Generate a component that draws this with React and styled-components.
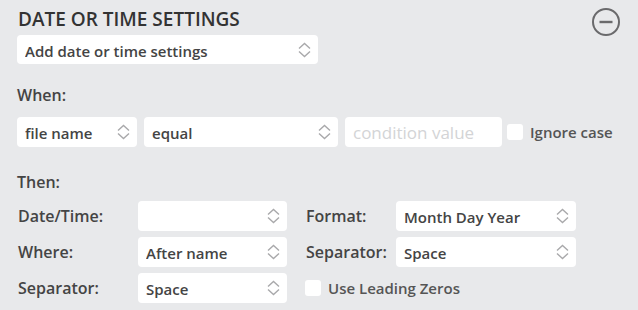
import React from "react";
import styled, { createGlobalStyle } from "styled-components";

const Global = createGlobalStyle`
  html, body { margin: 0; padding: 0; background: #e8e9eb; }
  body { font-family: "Open Sans", "Noto Sans", sans-serif; color: #444; }
`;

const Panel = styled.div`
  width: 638px;
  height: 310px;
  box-sizing: border-box;
  padding: 6px 0 0 17px;
  background: #e8e9eb;
  overflow: hidden;
`;

const Header = styled.div`
  display: flex;
  justify-content: space-between;
  align-items: flex-start;
  padding-right: 17px;
`;

const HeaderLeft = styled.div`
  display: flex;
  flex-direction: column;
  gap: 3px;
`;

const Title = styled.h1`
  margin: 0 0 0 1px;
  font-size: 19px;
  line-height: 26px;
  font-weight: 600;
  color: #333;
`;

const CollapseBtn = styled.button`
  border: 0;
  background: none;
  padding: 0;
  margin-top: 1px;
  width: 30px;
  height: 30px;
  display: flex;
  align-items: center;
  justify-content: center;
`;

const SelectBox = styled.div`
  box-sizing: border-box;
  width: ${(p) => p.$w}px;
  height: ${(p) => p.$h || 30}px;
  background: #fff;
  border-radius: 4px;
  display: flex;
  align-items: center;
  padding: 2px 7px 0 8px;
  font-size: 15px;
  font-weight: 600;
  color: #444;
`;

const SelectText = styled.span`
  flex: 1;
  white-space: nowrap;
  overflow: hidden;
`;

const Chevron = styled.svg`
  flex: none;
  margin-top: -2px;
`;

const Section = styled.div`
  margin-top: ${(p) => p.$mt}px;
  font-size: 16px;
  font-weight: 600;
  color: #444;
  line-height: 20px;
  margin-left: 0;
`;

const WhenRow = styled.div`
  display: flex;
  align-items: center;
  gap: 7px;
  margin-top: 12px;
`;

const Input = styled.div`
  box-sizing: border-box;
  width: 157px;
  height: 30px;
  background: #fff;
  border-radius: 4px;
  padding: 1px 0 0 8px;
  display: flex;
  align-items: center;
  font-size: 17px;
  color: #d3d4d6;
  font-weight: 400;
  white-space: nowrap;
`;

const Check = styled.span`
  display: inline-block;
  width: 16px;
  height: 16px;
  background: #fff;
  border-radius: 3px;
  flex: none;
`;

const CheckLabel = styled.label`
  display: flex;
  align-items: center;
  gap: 7px;
  margin-left: ${(p) => p.$ml || 0}px;
  font-size: 15px;
  font-weight: 600;
  color: #555;
  white-space: nowrap;
  grid-column: ${(p) => p.$span || "auto"};
`;

const Grid = styled.div`
  display: grid;
  grid-template-columns: 121px 149px 18px 91px 180px;
  grid-auto-rows: 30px;
  row-gap: 6px;
  margin-top: 9px;
  align-items: center;
`;

const Label = styled.div`
  font-size: 16px;
  font-weight: 600;
  color: #444;
  margin-left: 1px;
  white-space: nowrap;
`;

const ChevronIcon = () => (
  <Chevron width="13" height="16" viewBox="0 0 13 16">
    <path d="M1 6.5 L6.5 1.5 L12 6.5" fill="none" stroke="#a9a9ab" strokeWidth="1.4" />
    <path d="M1 9.5 L6.5 14.5 L12 9.5" fill="none" stroke="#a9a9ab" strokeWidth="1.4" />
  </Chevron>
);

const Select = ({ w, h, children }) => (
  <SelectBox $w={w} $h={h}>
    <SelectText>{children}</SelectText>
    <ChevronIcon />
  </SelectBox>
);

export default function App() {
  return (
    <>
      <Global />
      <Panel>
        <Header>
          <HeaderLeft>
            <Title>DATE OR TIME SETTINGS</Title>
            <Select w={301} h={29}>Add date or time settings</Select>
          </HeaderLeft>
          <CollapseBtn aria-label="collapse">
            <svg width="30" height="30" viewBox="0 0 30 30">
              <circle cx="15" cy="15" r="13" fill="none" stroke="#6a6a6c" strokeWidth="2" />
              <line x1="8.5" y1="15" x2="21.5" y2="15" stroke="#6a6a6c" strokeWidth="2.4" />
            </svg>
          </CollapseBtn>
        </Header>

        <Section $mt={21}>When:</Section>
        <WhenRow>
          <Select w={120}>file name</Select>
          <Select w={194}>equal</Select>
          <Input>condition value</Input>
          <CheckLabel $ml={-2}>
            <Check />
            Ignore case
          </CheckLabel>
        </WhenRow>

        <Section $mt={25}>Then:</Section>
        <Grid>
          <Label>Date/Time:</Label>
          <Select w={149} />
          <span />
          <Label>Format:</Label>
          <Select w={180}>Month Day Year</Select>

          <Label>Where:</Label>
          <Select w={149}>After name</Select>
          <span />
          <Label>Separator:</Label>
          <Select w={180}>Space</Select>

          <Label>Separator:</Label>
          <Select w={149}>Space</Select>
          <span />
          <CheckLabel $span="4 / 6">
            <Check />
            Use Leading Zeros
          </CheckLabel>
        </Grid>
      </Panel>
    </>
  );
}
